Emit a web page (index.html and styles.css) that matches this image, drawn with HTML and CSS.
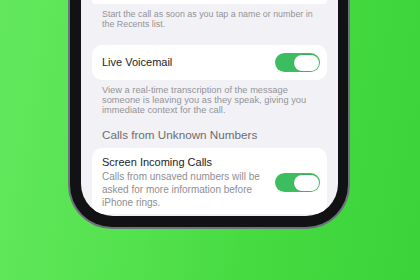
FILE: index.html
```html
<!DOCTYPE html>
<html>
<head>
<meta charset="utf-8">
<link rel="stylesheet" href="styles.css">
</head>
<body>
<div class="stage">
  <div class="phone">
    <div class="screen">
      <div class="card card-top"></div>
      <p class="footer">Start the call as soon as you tap a name or number in<br>the Recents list.</p>

      <div class="card row row-single">
        <span class="title">Live Voicemail</span>
        <span class="toggle"><span class="knob"></span></span>
      </div>
      <p class="footer footer-lv">View a real-time transcription of the message<br>someone is leaving you as they speak, giving you<br>immediate context for the call.</p>

      <p class="header">Calls from Unknown Numbers</p>

      <div class="card row row-double">
        <div class="texts">
          <span class="title">Screen Incoming Calls</span>
          <span class="sub">Calls from unsaved numbers will be<br>asked for more information before<br>iPhone rings.</span>
        </div>
        <span class="toggle"><span class="knob"></span></span>
      </div>
    </div>
  </div>
</div>
</body>
</html>
```

FILE: styles.css
```css
html, body {
  margin: 0;
  padding: 0;
}
body {
  width: 420px;
  height: 280px;
  overflow: hidden;
  background: linear-gradient(100deg, #63e85d 0%, #55e24f 35%, #45da40 65%, #3bd23a 100%);
  font-family: "Liberation Sans", Arial, sans-serif;
}
.stage {
  padding-left: 68px;
}
.phone {
  width: 282px;
  height: 229px;
  border: 2px solid #6d737d;
  border-top: none;
  border-radius: 0 0 44px 44px;
  background: #121214;
  padding: 0 10px 11px 11px;
  box-sizing: border-box;
}
.screen {
  width: 257px;
  height: 216px;
  background: #f2f2f6;
  border-radius: 0 0 32px 32px;
  overflow: hidden;
  padding: 0 11px;
  box-sizing: border-box;
}
.card {
  background: #ffffff;
  border-radius: 10px;
}
.card-top {
  height: 4px;
  border-radius: 0 0 10px 10px;
}
.footer {
  margin: 5px 0 0 0;
  padding-left: 10px;
  font-size: 8.9px;
  line-height: 10px;
  color: #939398;
  white-space: nowrap;
}
.footer-lv {
  font-size: 9.3px;
}
.row {
  display: flex;
  align-items: center;
  justify-content: space-between;
  padding: 0 7px 0 10px;
}
.row-single {
  margin-top: 16px;
  height: 35px;
}
.title {
  font-size: 11px;
  line-height: 13px;
  color: #1c1c1e;
  white-space: nowrap;
}
.header {
  margin: 13px 0 0 0;
  padding-left: 10px;
  font-size: 11.7px;
  line-height: 14px;
  color: #6c6c71;
  white-space: nowrap;
}
.row-double {
  margin-top: 6px;
  padding-top: 8px;
  padding-bottom: 5px;
}
.texts {
  display: flex;
  flex-direction: column;
  gap: 2px;
}
.sub {
  font-size: 10px;
  line-height: 12.8px;
  color: #8e8e93;
  white-space: nowrap;
}
.toggle {
  width: 45px;
  height: 19px;
  border-radius: 10px;
  background: #3cbd5f;
  display: flex;
  align-items: center;
  justify-content: flex-end;
  padding-right: 1.5px;
  box-sizing: border-box;
  flex: none;
}
.knob {
  width: 25px;
  height: 16px;
  border-radius: 8px;
  background: #ffffff;
  box-shadow: 0 0 0 0.6px rgba(0,0,0,0.08);
}
```
